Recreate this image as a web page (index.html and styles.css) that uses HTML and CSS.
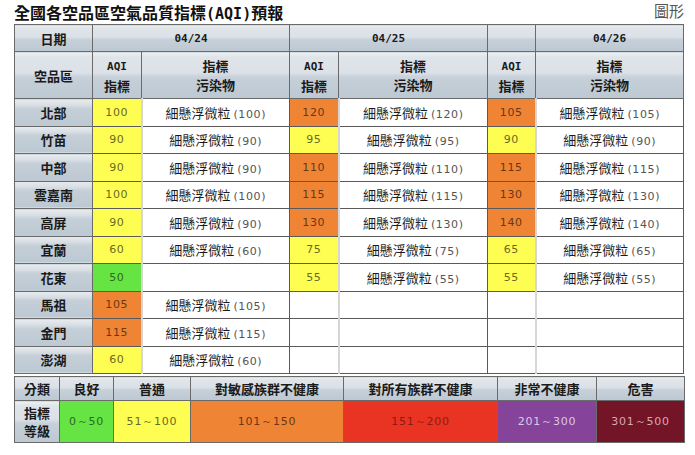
FILE: index.html
```html
<!DOCTYPE html>
<html lang="zh-Hant">
<head>
<meta charset="utf-8">
<title>全國各空品區空氣品質指標(AQI)預報</title>
<link rel="stylesheet" href="styles.css">
</head>
<body>
<div class="page">
  <div class="titlebar">
    <h1 class="title">全國各空品區空氣品質指標<span class="mono">(AQI)</span>預報</h1>
    <a class="chart-link" href="#">圖形</a>
  </div>

  <table class="aqi">
    <colgroup>
      <col class="w-area"><col class="w-aqi"><col class="w-pol"><col class="w-aqi"><col class="w-pol2"><col class="w-aqi2"><col class="w-pol">
    </colgroup>
    <thead>
      <tr class="r1">
        <th>日期</th>
        <th colspan="2" class="date">04/24</th>
        <th colspan="2" class="date">04/25</th>
        <th class="date"></th>
        <th class="date">04/26</th>
      </tr>
      <tr class="r2">
        <th>空品區</th>
        <th><span class="mono">AQI</span><br>指標</th>
        <th>指標<br>污染物</th>
        <th><span class="mono">AQI</span><br>指標</th>
        <th>指標<br>污染物</th>
        <th><span class="mono">AQI</span><br>指標</th>
        <th>指標<br>污染物</th>
      </tr>
    </thead>
    <tbody>
      <tr class="dk">
        <th>北部</th>
        <td class="v y">100</td><td class="p">細懸浮微粒<span class="n">(100)</span></td>
        <td class="v o">120</td><td class="p">細懸浮微粒<span class="n">(120)</span></td>
        <td class="v o">105</td><td class="p">細懸浮微粒<span class="n">(105)</span></td>
      </tr>
      <tr class="lt">
        <th>竹苗</th>
        <td class="v y">90</td><td class="p">細懸浮微粒<span class="n">(90)</span></td>
        <td class="v y">95</td><td class="p">細懸浮微粒<span class="n">(95)</span></td>
        <td class="v y">90</td><td class="p">細懸浮微粒<span class="n">(90)</span></td>
      </tr>
      <tr class="lt">
        <th>中部</th>
        <td class="v y">90</td><td class="p">細懸浮微粒<span class="n">(90)</span></td>
        <td class="v o">110</td><td class="p">細懸浮微粒<span class="n">(110)</span></td>
        <td class="v o">115</td><td class="p">細懸浮微粒<span class="n">(115)</span></td>
      </tr>
      <tr class="dk">
        <th>雲嘉南</th>
        <td class="v y">100</td><td class="p">細懸浮微粒<span class="n">(100)</span></td>
        <td class="v o">115</td><td class="p">細懸浮微粒<span class="n">(115)</span></td>
        <td class="v o">130</td><td class="p">細懸浮微粒<span class="n">(130)</span></td>
      </tr>
      <tr class="lt">
        <th>高屏</th>
        <td class="v y">90</td><td class="p">細懸浮微粒<span class="n">(90)</span></td>
        <td class="v o">130</td><td class="p">細懸浮微粒<span class="n">(130)</span></td>
        <td class="v o">140</td><td class="p">細懸浮微粒<span class="n">(140)</span></td>
      </tr>
      <tr class="dk">
        <th>宜蘭</th>
        <td class="v y">60</td><td class="p">細懸浮微粒<span class="n">(60)</span></td>
        <td class="v y">75</td><td class="p">細懸浮微粒<span class="n">(75)</span></td>
        <td class="v y">65</td><td class="p">細懸浮微粒<span class="n">(65)</span></td>
      </tr>
      <tr class="lt">
        <th>花東</th>
        <td class="v g">50</td><td class="p"></td>
        <td class="v y">55</td><td class="p">細懸浮微粒<span class="n">(55)</span></td>
        <td class="v y">55</td><td class="p">細懸浮微粒<span class="n">(55)</span></td>
      </tr>
      <tr class="dk">
        <th>馬祖</th>
        <td class="v o">105</td><td class="p">細懸浮微粒<span class="n">(105)</span></td>
        <td class="v"></td><td class="p"></td>
        <td class="v"></td><td class="p"></td>
      </tr>
      <tr class="dk">
        <th>金門</th>
        <td class="v o">115</td><td class="p">細懸浮微粒<span class="n">(115)</span></td>
        <td class="v"></td><td class="p"></td>
        <td class="v"></td><td class="p"></td>
      </tr>
      <tr class="dk">
        <th>澎湖</th>
        <td class="v y">60</td><td class="p">細懸浮微粒<span class="n">(60)</span></td>
        <td class="v"></td><td class="p"></td>
        <td class="v"></td><td class="p"></td>
      </tr>
    </tbody>
  </table>

  <table class="legend">
    <colgroup>
      <col class="l1"><col class="l2"><col class="l3"><col class="l4"><col class="l5"><col class="l6"><col class="l7">
    </colgroup>
    <tr class="lh">
      <th>分類</th><th>良好</th><th>普通</th><th>對敏感族群不健康</th><th>對所有族群不健康</th><th>非常不健康</th><th>危害</th>
    </tr>
    <tr class="lv">
      <th>指標<br>等級</th>
      <td class="g">0～50</td>
      <td class="y">51～100</td>
      <td class="o">101～150</td>
      <td class="r">151～200</td>
      <td class="pu">201～300</td>
      <td class="m">301～500</td>
    </tr>
  </table>
</div>
</body>
</html>
```

FILE: styles.css
```css
html, body {
  margin: 0;
  padding: 0;
  background: #fff;
}
body {
  font-family: "Noto Sans CJK TC", "Noto Sans", sans-serif;
  color: #111;
}
.page {
  padding: 0 11px 0 14px;
}
.titlebar {
  display: flex;
  justify-content: space-between;
  align-items: flex-start;
}
.title {
  margin: 0;
  font-size: 16px;
  line-height: normal;
  font-weight: bold;
  color: #111;
}
.title .mono {
  font-family: "DejaVu Sans Mono", monospace;
  font-size: 15px;
}
.chart-link {
  font-size: 15px;
  line-height: normal;
  color: #555;
  text-decoration: none;
}
.mono {
  font-family: "DejaVu Sans Mono", monospace;
  font-weight: bold;
}

table {
  border-collapse: collapse;
  table-layout: fixed;
  width: 670px;
}
.w-area { width: 78px; }
.w-aqi { width: 49px; }
.w-aqi2 { width: 48px; }
.w-pol { width: 148px; }
.w-pol2 { width: 149px; }

.aqi th, .legend th {
  background: linear-gradient(to bottom, #eef1f3 0%, #dfe4e9 10%, #dbe1e7 44%, #c6d0d9 54%, #bcc8d2 100%);
  font-weight: bold;
  font-size: 13px;
  color: #1a1a1a;
  border: 1px solid #6a6a6a;
  padding: 0;
  text-align: center;
  vertical-align: middle;
}
.aqi th.date {
  font-family: "DejaVu Sans Mono", monospace;
  font-size: 11px;
}
.aqi .r1 th { height: 26px; }
.aqi .r2 th { height: 46px; line-height: 19px; }
.aqi .r2 th .mono { font-size: 11px; }

.aqi tbody th {
  height: 26.5px;
  background: linear-gradient(to bottom, #e8ecef 0%, #d9dfe5 20%, #c5cfd8 35%, #bcc8d2 100%);
}
.aqi td {
  border: 1px solid #5a5a5a;
  padding: 0;
  text-align: center;
  vertical-align: middle;
  height: 26.5px;
  background: #fff;
}
.aqi tr.lt td, .aqi tr.lt th { border-top-color: #aaa; }
.aqi td.v {
  font-family: "DejaVu Sans", sans-serif;
  font-size: 11px;
  letter-spacing: 0.6px;
  border-right: 2px solid #d6d6d6;
  color: #555;
}
.aqi td.p {
  font-size: 13px;
  color: #1a1a1a;
}
.aqi .n {
  font-family: "DejaVu Sans", sans-serif;
  font-size: 11px;
  letter-spacing: 0.6px;
  color: #555;
  margin-left: 3px;
}

.y { background: #fefe52 !important; color: #6a6a24 !important; }
.o { background: #ef8434 !important; color: #6a3814 !important; }
.g { background: #66e444 !important; color: #2d6a22 !important; }
.r { background: #e93323 !important; color: #8e1c12 !important; }
.pu { background: #85439a !important; color: #dcc8e2 !important; }
.m { background: #731526 !important; color: #d4a9b2 !important; }

.legend {
  margin-top: 2px;
}
.l1 { width: 45px; }
.l2 { width: 54px; }
.l3 { width: 77px; }
.l4 { width: 153px; }
.l5 { width: 154px; }
.l6 { width: 99px; }
.l7 { width: 88px; }
.legend .lh th { height: 23px; }
.legend .lv th { height: 41px; line-height: 18px; }
.legend td {
  border: 1px solid #6a6a6a;
  border-left-color: #ddd;
  padding: 0;
  text-align: center;
  font-family: "DejaVu Sans", sans-serif;
  font-size: 11px;
  letter-spacing: 0.8px;
}
```
